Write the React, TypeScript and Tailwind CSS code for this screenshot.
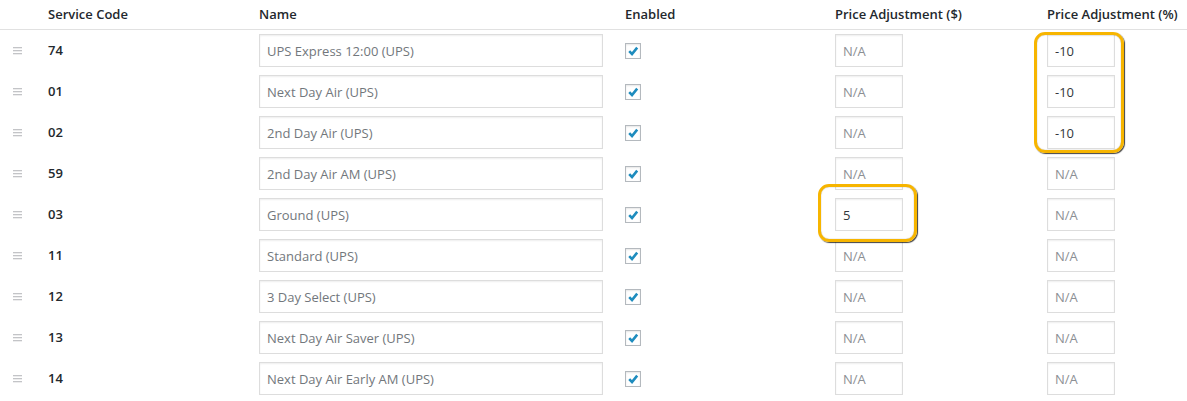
import React from 'react';

const rows = [
  { code: '74', name: 'UPS Express 12:00 (UPS)', usd: '', pct: '-10' },
  { code: '01', name: 'Next Day Air (UPS)', usd: '', pct: '-10' },
  { code: '02', name: '2nd Day Air (UPS)', usd: '', pct: '-10' },
  { code: '59', name: '2nd Day Air AM (UPS)', usd: '', pct: '' },
  { code: '03', name: 'Ground (UPS)', usd: '5', pct: '' },
  { code: '11', name: 'Standard (UPS)', usd: '', pct: '' },
  { code: '12', name: '3 Day Select (UPS)', usd: '', pct: '' },
  { code: '13', name: 'Next Day Air Saver (UPS)', usd: '', pct: '' },
  { code: '14', name: 'Next Day Air Early AM (UPS)', usd: '', pct: '' },
];

const inputCls =
  'h-[33px] border border-[#dddddd] bg-white px-[7px] text-[13px] text-[#32373c] placeholder:text-[#8c8f94] shadow-[inset_0_1px_2px_rgba(0,0,0,0.07)] outline-none';

function Handle() {
  return (
    <svg width="10" height="8" viewBox="0 0 10 8" className="ml-[13px]">
      <rect x="0" y="0" width="9" height="1.3" fill="#c3c4c7" />
      <rect x="0" y="3" width="9" height="1.3" fill="#c3c4c7" />
      <rect x="0" y="6" width="9" height="1.3" fill="#c3c4c7" />
    </svg>
  );
}

function Check() {
  return (
    <span className="grid h-4 w-4 place-items-center border border-[#b4b9be] bg-white shadow-[inset_0_1px_2px_rgba(0,0,0,0.1)]">
      <svg width="12" height="12" viewBox="0 0 12 12">
        <path d="M2.2 6.2 L5 9 L10.2 2.6" fill="none" stroke="#1e8cbe" strokeWidth="2.6" strokeLinejoin="miter" />
      </svg>
    </span>
  );
}

export default function App() {
  return (
    <div className="relative w-[1187px] h-[401px] overflow-hidden bg-white" style={{ fontFamily: '"Open Sans", "Noto Sans", sans-serif' }}>
      <div className="grid h-[30px] grid-cols-[48px_211px_366px_210px_212px_1fr] items-center border-b border-[#e1e1e1] text-[13px] font-semibold text-[#23282d]">
        <span />
        <span>Service Code</span>
        <span>Name</span>
        <span>Enabled</span>
        <span>Price Adjustment ($)</span>
        <span>Price Adjustment (%)</span>
      </div>
      {rows.map((r) => (
        <div key={r.code} className="grid h-[41px] grid-cols-[48px_211px_366px_210px_212px_1fr] items-center">
          <Handle />
          <span className="text-[13px] font-semibold text-[#23282d]">{r.code}</span>
          <input readOnly value={r.name} className={`${inputCls} w-[344px] !text-[#72777c]`} />
          <Check />
          <input readOnly value={r.usd} placeholder="N/A" className={`${inputCls} w-[68px]`} />
          <input readOnly value={r.pct} placeholder="N/A" className={`${inputCls} w-[68px]`} />
        </div>
      ))}
      <div className="absolute left-[1034px] top-[32px] h-[121px] w-[90px] rounded-[11px] border-[3px] border-[#f7b500] shadow-[1px_1px_1px_rgba(0,0,0,0.75),inset_0_0_1px_rgba(0,0,0,0.5)]" />
      <div className="absolute left-[818px] top-[184px] h-[58px] w-[99px] rounded-[11px] border-[3px] border-[#f7b500] shadow-[1px_1px_1px_rgba(0,0,0,0.75),inset_0_0_1px_rgba(0,0,0,0.5)]" />
    </div>
  );
}
